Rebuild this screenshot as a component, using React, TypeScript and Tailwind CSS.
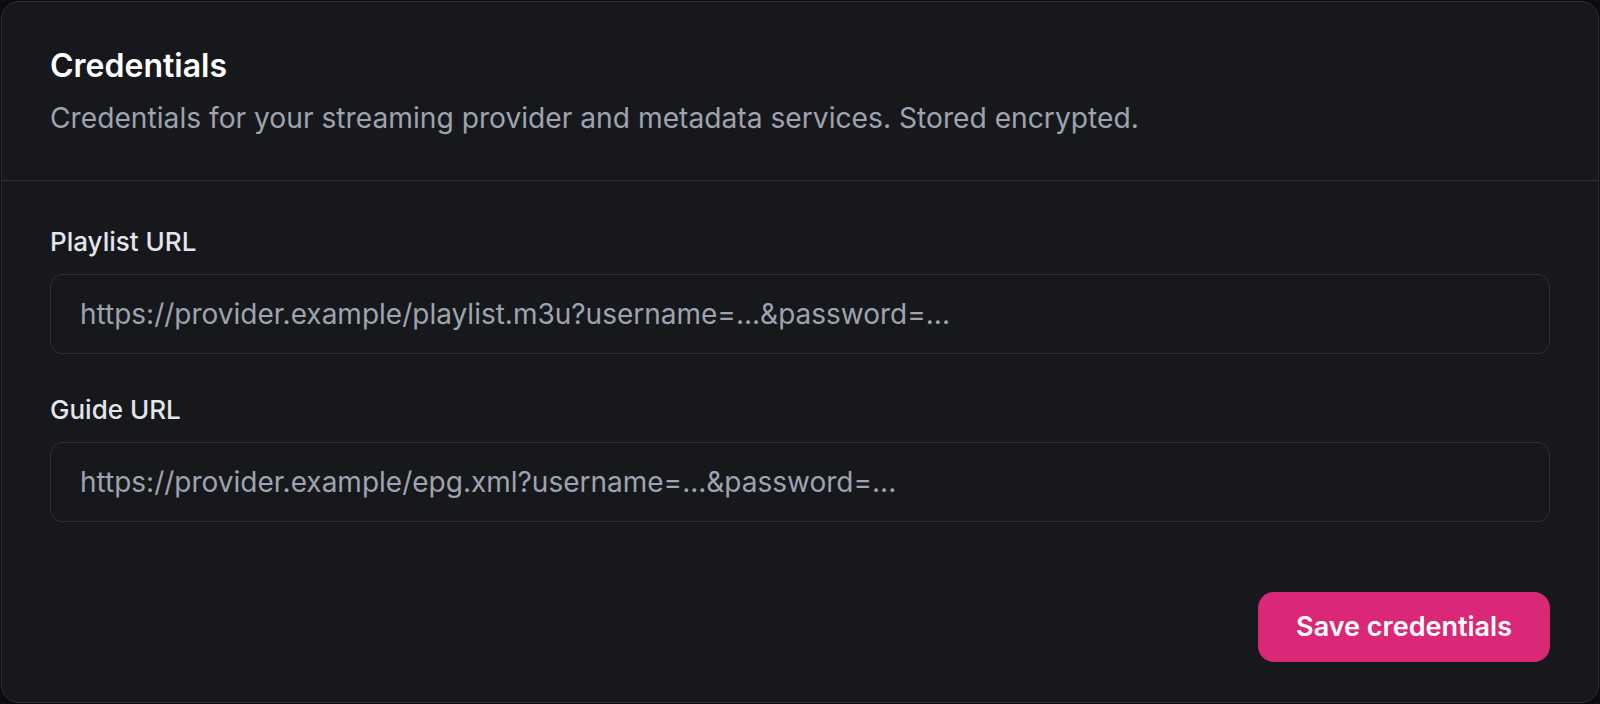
import React from "react";

function Field({ label, placeholder }: { label: string; placeholder: string }) {
  return (
    <div className="flex flex-col gap-[14px]">
      <label className="text-[26px] leading-[36px] font-medium text-[#e4e6eb]">{label}</label>
      <input
        type="text"
        placeholder={placeholder}
        className="h-[80px] w-full rounded-[12px] border border-[#2e2f37] bg-[#17181c] pl-[29px] pr-[29px] text-[28px] text-[#e4e6eb] placeholder:text-[#9ea3af] outline-none"
      />
    </div>
  );
}

export default function App() {
  return (
    <div
      className="min-h-[704px] w-full bg-[#0c0d10] p-px"
      style={{ fontFamily: "Inter, 'Liberation Sans', sans-serif" }}
    >
      <div className="flex flex-col rounded-[18px] border border-[#2d2e35] bg-[#17181c]">
        <div className="border-b border-[#2d2e35] px-12 pt-[44px] pb-[42px]">
          <h2 className="text-[32px] leading-[40px] font-semibold text-white">Credentials</h2>
          <p className="mt-3 text-[28.2px] leading-[40px] text-[#9ea3af]">
            Credentials for your streaming provider and metadata services. Stored encrypted.
          </p>
        </div>
        <div className="flex flex-col px-12 pt-[43px] pb-[40px]">
          <div className="flex flex-col gap-[38px]">
            <Field
              label="Playlist URL"
              placeholder="https://provider.example/playlist.m3u?username=...&password=..."
            />
            <Field
              label="Guide URL"
              placeholder="https://provider.example/epg.xml?username=...&password=..."
            />
          </div>
          <div className="mt-[70px] flex justify-end">
            <button className="h-[70px] rounded-[16px] bg-[#db2777] px-[38px] text-[27px] font-semibold text-white">
              Save credentials
            </button>
          </div>
        </div>
      </div>
    </div>
  );
}
